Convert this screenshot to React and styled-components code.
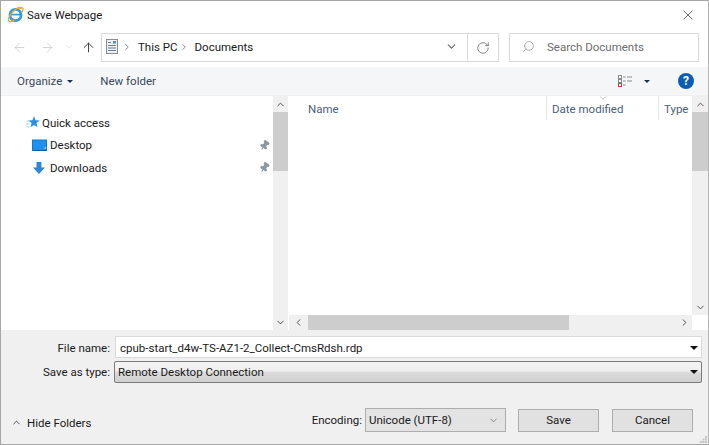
import React from 'react'
import styled, { createGlobalStyle } from 'styled-components'
import { ArrowLeft, ArrowRight, ArrowUp, ChevronDown, ChevronUp, ChevronLeft, ChevronRight, RotateCw, Search, X, Pin } from 'lucide-react'

const Global = createGlobalStyle`
html, body { margin: 0; padding: 0; background: #fff; }
#root { width: 709px; height: 445px; }
* { box-sizing: border-box; }
`

const Dialog = styled.div`
width: 709px;
height: 445px;
display: flex;
flex-direction: column;
border: 1px solid #a6a6a6;
border-right-color: #b4b4b4;
font-family: Roboto, "Open Sans", "Liberation Sans", sans-serif;
font-size: 11.5px;
color: #1a1a1a;
background: #fff;
overflow: hidden;
`
const TitleBar = styled.div`
height: 32px;
flex: none;
display: flex;
align-items: center;
padding: 0 12px 5px 6px;
gap: 3px;
`
const Title = styled.div`
flex: 1;
`
const NavBar = styled.div`
height: 34px;
flex: none;
display: flex;
align-items: flex-start;
padding-left: 4px;
`
const NavButton = styled.div`
width: ${p => p.$w || 24}px;
height: 28px;
display: flex;
align-items: center;
justify-content: center;
color: ${p => p.$on ? '#444' : '#c8c8c8'};
`
const AddressBox = styled.div`
width: 398px;
height: 29px;
margin-left: 1px;
display: flex;
align-items: center;
border: 1px solid #d9d9d9;
padding: 0 0 2px 4px;
`
const Crumb = styled.span`
margin: 0 6px 0 ${p => p.$ml}px;
color: #777;
display: flex;
`
const Spacer = styled.div`
flex: 1;
`
const AddressDrop = styled.div`
width: 32px;
display: flex;
align-items: center;
justify-content: center;
color: #666;
`
const RefreshBtn = styled.div`
width: 31px;
align-self: stretch;
margin-bottom: -2px;
display: flex;
align-items: center;
justify-content: center;
border-left: 1px solid #d9d9d9;
color: #777;
`
const SearchBox = styled.div`
width: 190px;
height: 29px;
margin-left: 10px;
display: flex;
align-items: center;
border: 1px solid #d9d9d9;
padding: 0 0 2px 12px;
gap: 12px;
color: #6d6d6d;
`
const Toolbar = styled.div`
height: 29px;
flex: none;
display: flex;
align-items: center;
background: #f5f6f7;
border-bottom: 1px solid #eef0f2;
padding: 0 14px 0 16px;
color: #39495c;
`
const Caret = styled.span`
display: inline-block;
width: 0;
height: 0;
margin-left: ${p => p.$ml || 5}px;
border-left: ${p => p.$s || 3}px solid transparent;
border-right: ${p => p.$s || 3}px solid transparent;
border-top: ${p => p.$s || 3}px solid ${p => p.$c || '#1d2f4a'};
`
const ToolLabel = styled.span`
margin-left: ${p => p.$ml || 0}px;
display: inline-flex;
align-items: center;
`
const HelpIcon = styled.div`
width: 16px;
height: 16px;
margin-left: 28px;
border-radius: 50%;
background: #0b5cb5;
color: #fff;
font-weight: 700;
font-size: 12px;
line-height: 16px;
text-align: center;
`
const Body = styled.div`
flex: 1;
min-height: 0;
display: flex;
`
const SidePane = styled.div`
width: 272px;
flex: none;
padding-top: 15.5px;
`
const TreeRow = styled.div`
height: 22.5px;
display: flex;
align-items: center;
padding-left: ${p => p.$indent}px;
padding-right: 3px;
gap: ${p => p.$gap}px;
`
const PinMark = styled.span`
margin-left: auto;
display: flex;
color: #8f979e;
`
const VScroll = styled.div`
width: ${p => p.$w}px;
flex: none;
display: flex;
flex-direction: column;
background: #f0f0f0;
`
const ScrollEnd = styled.div`
height: 16px;
flex: none;
display: flex;
align-items: center;
justify-content: center;
color: #444;
`
const VThumb = styled.div`
height: ${p => p.$h}px;
flex: none;
background: #cdcdcd;
`
const Gap = styled.div`
width: 1px;
flex: none;
background: #fff;
`
const Main = styled.div`
flex: 1;
min-width: 0;
display: flex;
flex-direction: column;
`
const ListArea = styled.div`
flex: 1;
min-height: 0;
display: flex;
`
const ListPane = styled.div`
flex: 1;
min-width: 0;
`
const ListHead = styled.div`
height: 24px;
display: flex;
color: #4c607a;
`
const HeadCell = styled.div`
position: relative;
width: ${p => p.$w}px;
flex: none;
padding: 5.5px 0 0 ${p => p.$pl}px;
border-right: ${p => p.$line ? '1px solid #e5e5e5' : 'none'};
overflow: hidden;
white-space: nowrap;
`
const SortMark = styled.span`
position: absolute;
top: -3px;
left: 51px;
display: flex;
color: #666;
`
const HScroll = styled.div`
height: 15px;
flex: none;
display: flex;
align-items: center;
background: #f0f0f0;
`
const HEnd = styled.div`
width: ${p => p.$w}px;
height: 100%;
flex: none;
display: flex;
align-items: center;
justify-content: center;
color: #444;
background: ${p => p.$blank ? '#fff' : 'transparent'};
`
const HThumb = styled.div`
width: 261px;
height: 100%;
flex: none;
background: #cdcdcd;
`
const Footer = styled.div`
position: relative;
height: 114px;
flex: none;
background: #f0f0f0;
display: flex;
flex-direction: column;
padding: 6px 6px 0 0;
`
const FormRow = styled.div`
display: flex;
align-items: center;
height: ${p => p.$h}px;
margin-bottom: ${p => p.$mb || 0}px;
`
const FieldLabel = styled.div`
width: 113px;
flex: none;
text-align: right;
padding: ${p => p.$pt || 0}px 4px 0 0;
`
const NameField = styled.div`
flex: 1;
height: 22px;
margin-left: 1px;
display: flex;
align-items: center;
justify-content: space-between;
background: #fff;
border: 1px solid #d9d9d9;
padding: 1px 3px 0 4px;
`
const TypeField = styled.div`
flex: 1;
height: 22px;
display: flex;
align-items: center;
justify-content: space-between;
background: linear-gradient(#f4f4f4 0%, #efefef 45%, #dcdcdc 50%, #cfcfcf 100%);
border: 1px solid #7a7a7a;
border-radius: 2px;
padding: 0 3px 0 3px;
`
const ActionRow = styled.div`
display: flex;
align-items: center;
height: 24px;
margin-top: 25px;
padding-left: 10px;
padding-right: 9px;
`
const HideLink = styled.div`
display: flex;
align-items: center;
gap: 5px;
flex: 1;
padding-top: 5px;
`
const EncodingSelect = styled.div`
width: 141px;
height: 24px;
margin-left: 3px;
display: flex;
align-items: center;
justify-content: space-between;
background: #e3e3e3;
border: 1px solid #adadad;
padding: 0 6px 0 3px;
`
const ActionButton = styled.div`
width: 81px;
height: 23px;
margin-left: ${p => p.$ml}px;
display: flex;
align-items: center;
justify-content: center;
background: #e1e1e1;
border: 1px solid #adadad;
`
const Grip = styled.svg`
position: absolute;
right: 1px;
bottom: 1px;
`

const IeLogo = () => (
  <svg width="17" height="17" viewBox="0 0 17 17">
    <circle cx="8.5" cy="9" r="5.6" fill="none" stroke="#2f9be0" strokeWidth="2.6" />
    <path d="M4 8.6h9.5" stroke="#2f9be0" strokeWidth="1.7" />
    <path d="M13 12.2a5.6 5.6 0 0 1-2.8 2.2" stroke="#2f9be0" strokeWidth="2" fill="none" />
    <path d="M14.8 1.8c-2-.8-6 .8-9.5 4.6C2 10 .6 14 2 15.2c1 .9 3 .2 5-1" fill="none" stroke="#e8a91c" strokeWidth="1.3" />
    <path d="M12 2.6c2-.9 3.6-.9 4 .2.3 1-.2 2.2-1.2 3.6" fill="none" stroke="#e8a91c" strokeWidth="1.3" />
  </svg>
)
const DocsIcon = () => (
  <svg width="12" height="15" viewBox="0 0 12 15">
    <rect x=".5" y=".5" width="11" height="14" fill="#eef0f2" stroke="#8d8d8d" />
    <path d="M2 3.5h3M2 6.5h8M2 9h8M2 11.5h8" stroke="#6f7f8f" />
    <rect x="7" y="2" width="3" height="2.5" fill="#4a90c8" />
  </svg>
)
const StarIcon = () => (
  <svg width="15" height="14" viewBox="0 0 15 14">
    <path d="M9 0l1.5 4.2 4.3.2-3.4 2.7 1.2 4.2L9 8.9l-3.6 2.4 1.2-4.2L3.2 4.4l4.3-.2z" fill="#2a8fe0" />
    <path d="M1.5 5h3M.5 8h4M1.5 11h3" stroke="#a8d4f2" />
  </svg>
)
const DesktopIcon = () => (
  <svg width="15" height="13" viewBox="0 0 15 13">
    <rect x=".5" y="1" width="14" height="10.5" fill="#1e90ee" stroke="#0f78d0" />
    <path d="M12 9.5l2-2v2z" fill="#bfe2fb" />
    <path d="M1 11.5h13" stroke="#0b5fa8" />
  </svg>
)
const DownloadIcon = () => (
  <svg width="14" height="14" viewBox="0 0 14 14">
    <path d="M4.5 1h5v5.5H13L7 13 1 6.5h3.5z" fill="#2b86dc" />
  </svg>
)
const ViewsIcon = () => (
  <svg width="15" height="13" viewBox="0 0 15 13">
    <rect x=".5" y=".5" width="3" height="3" fill="#fff" stroke="#8b8b8b" />
    <rect x=".5" y="4.5" width="3" height="3" fill="#fff" stroke="#8b8b8b" />
    <rect x=".5" y="8.5" width="3" height="3" fill="#fff" stroke="#b04a4a" />
    <path d="M5 2h2.5M9 2h5M5 6h2.5M9 6h5M5 10h2.5" stroke="#8b8b8b" />
  </svg>
)

const App = () => (
  <Dialog>
    <Global />
    <TitleBar>
      <IeLogo />
      <Title>Save Webpage</Title>
      <X size={16} strokeWidth={1} color="#222" />
    </TitleBar>
    <NavBar>
      <NavButton $w={28}><ArrowLeft size={15} strokeWidth={1.2} /></NavButton>
      <NavButton $w={29}><ArrowRight size={15} strokeWidth={1.2} /></NavButton>
      <NavButton $w={14}><ChevronDown size={10} strokeWidth={1.2} /></NavButton>
      <NavButton $w={24} $on><ArrowUp size={15} strokeWidth={1.6} /></NavButton>
      <AddressBox>
        <DocsIcon />
        <Crumb $ml={4}><ChevronRight size={10} /></Crumb>
        This PC
        <Crumb $ml={1}><ChevronRight size={10} /></Crumb>
        Documents
        <Spacer />
        <AddressDrop><ChevronDown size={13} /></AddressDrop>
        <RefreshBtn><RotateCw size={14} strokeWidth={1.5} /></RefreshBtn>
      </AddressBox>
      <SearchBox>
        <Search size={13} strokeWidth={1} style={{ transform: 'scaleX(-1)' }} />
        Search Documents
      </SearchBox>
    </NavBar>
    <Toolbar>
      <ToolLabel>Organize<Caret /></ToolLabel>
      <ToolLabel $ml={27}>New folder</ToolLabel>
      <Spacer />
      <ViewsIcon />
      <Caret $ml={11} />
      <HelpIcon>?</HelpIcon>
    </Toolbar>
    <Body>
      <SidePane>
        <TreeRow $indent={24} $gap={2}><StarIcon />Quick access</TreeRow>
        <TreeRow $indent={31} $gap={3}>
          <DesktopIcon />Desktop
          <PinMark><Pin size={11} fill="#8f979e" style={{ transform: 'rotate(35deg)' }} /></PinMark>
        </TreeRow>
        <TreeRow $indent={31} $gap={4}>
          <DownloadIcon />Downloads
          <PinMark><Pin size={11} fill="#8f979e" style={{ transform: 'rotate(35deg)' }} /></PinMark>
        </TreeRow>
      </SidePane>
      <VScroll $w={15}>
        <ScrollEnd><ChevronUp size={11} strokeWidth={2} /></ScrollEnd>
        <VThumb $h={59} />
        <Spacer />
        <ScrollEnd><ChevronDown size={11} strokeWidth={2} /></ScrollEnd>
      </VScroll>
      <Gap />
      <Main>
        <ListArea>
          <ListPane>
            <ListHead>
              <HeadCell $w={258} $pl={19} $line>Name</HeadCell>
              <HeadCell $w={112} $pl={5} $line>
                <SortMark><ChevronDown size={10} strokeWidth={1} /></SortMark>
                Date modified
              </HeadCell>
              <HeadCell $w={33} $pl={5}>Type</HeadCell>
            </ListHead>
          </ListPane>
          <VScroll $w={16}>
            <ScrollEnd><ChevronUp size={11} strokeWidth={2} /></ScrollEnd>
            <VThumb $h={59} />
            <Spacer />
            <ScrollEnd><ChevronDown size={11} strokeWidth={2} /></ScrollEnd>
          </VScroll>
        </ListArea>
        <HScroll>
          <HEnd $w={19}><ChevronLeft size={11} strokeWidth={2} /></HEnd>
          <HThumb />
          <Spacer />
          <HEnd $w={16}><ChevronRight size={11} strokeWidth={2} /></HEnd>
          <HEnd $w={16} $blank />
        </HScroll>
      </Main>
    </Body>
    <Footer>
      <FormRow $h={22} $mb={3}>
        <FieldLabel $pt={1}>File name:</FieldLabel>
        <NameField>cpub-start_d4w-TS-AZ1-2_Collect-CmsRdsh.rdp<Caret $c="#111" $s={4} /></NameField>
      </FormRow>
      <FormRow $h={22}>
        <FieldLabel>Save as type:</FieldLabel>
        <TypeField>Remote Desktop Connection<Caret $c="#111" $s={4} /></TypeField>
      </FormRow>
      <ActionRow>
        <HideLink><ChevronUp size={11} strokeWidth={1.6} />Hide Folders</HideLink>
        Encoding:
        <EncodingSelect>Unicode (UTF-8)<ChevronDown size={11} strokeWidth={1} /></EncodingSelect>
        <ActionButton $ml={12}>Save</ActionButton>
        <ActionButton $ml={13}>Cancel</ActionButton>
      </ActionRow>
      <Grip width="7" height="7" viewBox="0 0 7 7">
        <path d="M5 0h2v2H5zM2.500 2.500h2v2h-2zM5 2.500h2v2H5zM0 5h2v2H0zM2.500 5h2v2h-2zM5 5h2v2H5z" fill="#c4c4c4" />
      </Grip>
    </Footer>
  </Dialog>
)

export default App
